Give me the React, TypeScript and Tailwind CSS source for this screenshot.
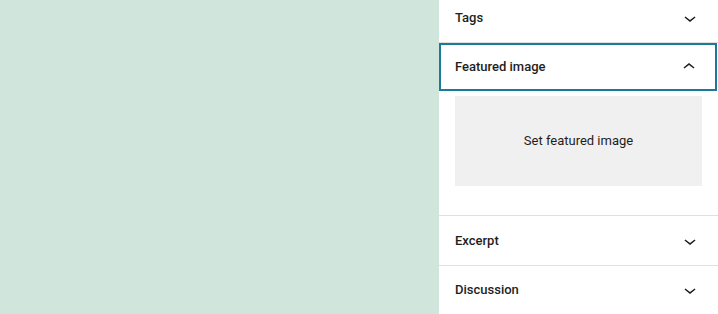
const Chevron = ({ up }: { up?: boolean }) => (
    <svg width="24" height="24" viewBox="0 0 24 24" className={up ? "rotate-180" : ""} fill="#1e1e1e">
        <path d="M17.5 11.6L12 16l-5.5-4.4.9-1.2L12 14l4.6-3.6z" />
    </svg>
);

const PanelHeader = ({ title, open, focused, tall }: { title: string; open?: boolean; focused?: boolean; tall?: boolean }) => (
    <button
        className={
            "flex items-center justify-between px-4 text-left text-[13px] font-medium text-[#1e1e1e] " +
            (tall ? "h-[49px] " : "h-12 ") +
            (focused ? "mr-px shadow-[inset_0_0_0_2px_#1b7a9b]" : "w-full")
        }
    >
        <span>{title}</span>
        <Chevron up={open} />
    </button>
);

export default function App() {
    return (
        <div className="flex h-[314px] w-[718px] overflow-hidden bg-[#d0e6dd] font-['Roboto',sans-serif]">
            <div className="flex-1" />
            <div className="flex w-[279px] flex-col bg-white">
                <div className="-mt-[6px] border-b border-[#e0e0e0]">
                    <PanelHeader title="Tags" />
                </div>
                <div className="flex flex-col border-b border-[#e0e0e0]">
                    <PanelHeader title="Featured image" open focused />
                    <div className="px-4 pt-[5px] pb-[29px]">
                        <button className="flex h-[90px] w-full items-center justify-center bg-[#f0f0f0] text-[13px] text-[#1e1e1e]">
                            Set featured image
                        </button>
                    </div>
                </div>
                <div className="border-b border-[#e0e0e0]">
                    <PanelHeader title="Excerpt" tall />
                </div>
                <div className="border-b border-[#e0e0e0]">
                    <PanelHeader title="Discussion" />
                </div>
            </div>
        </div>
    );
}
